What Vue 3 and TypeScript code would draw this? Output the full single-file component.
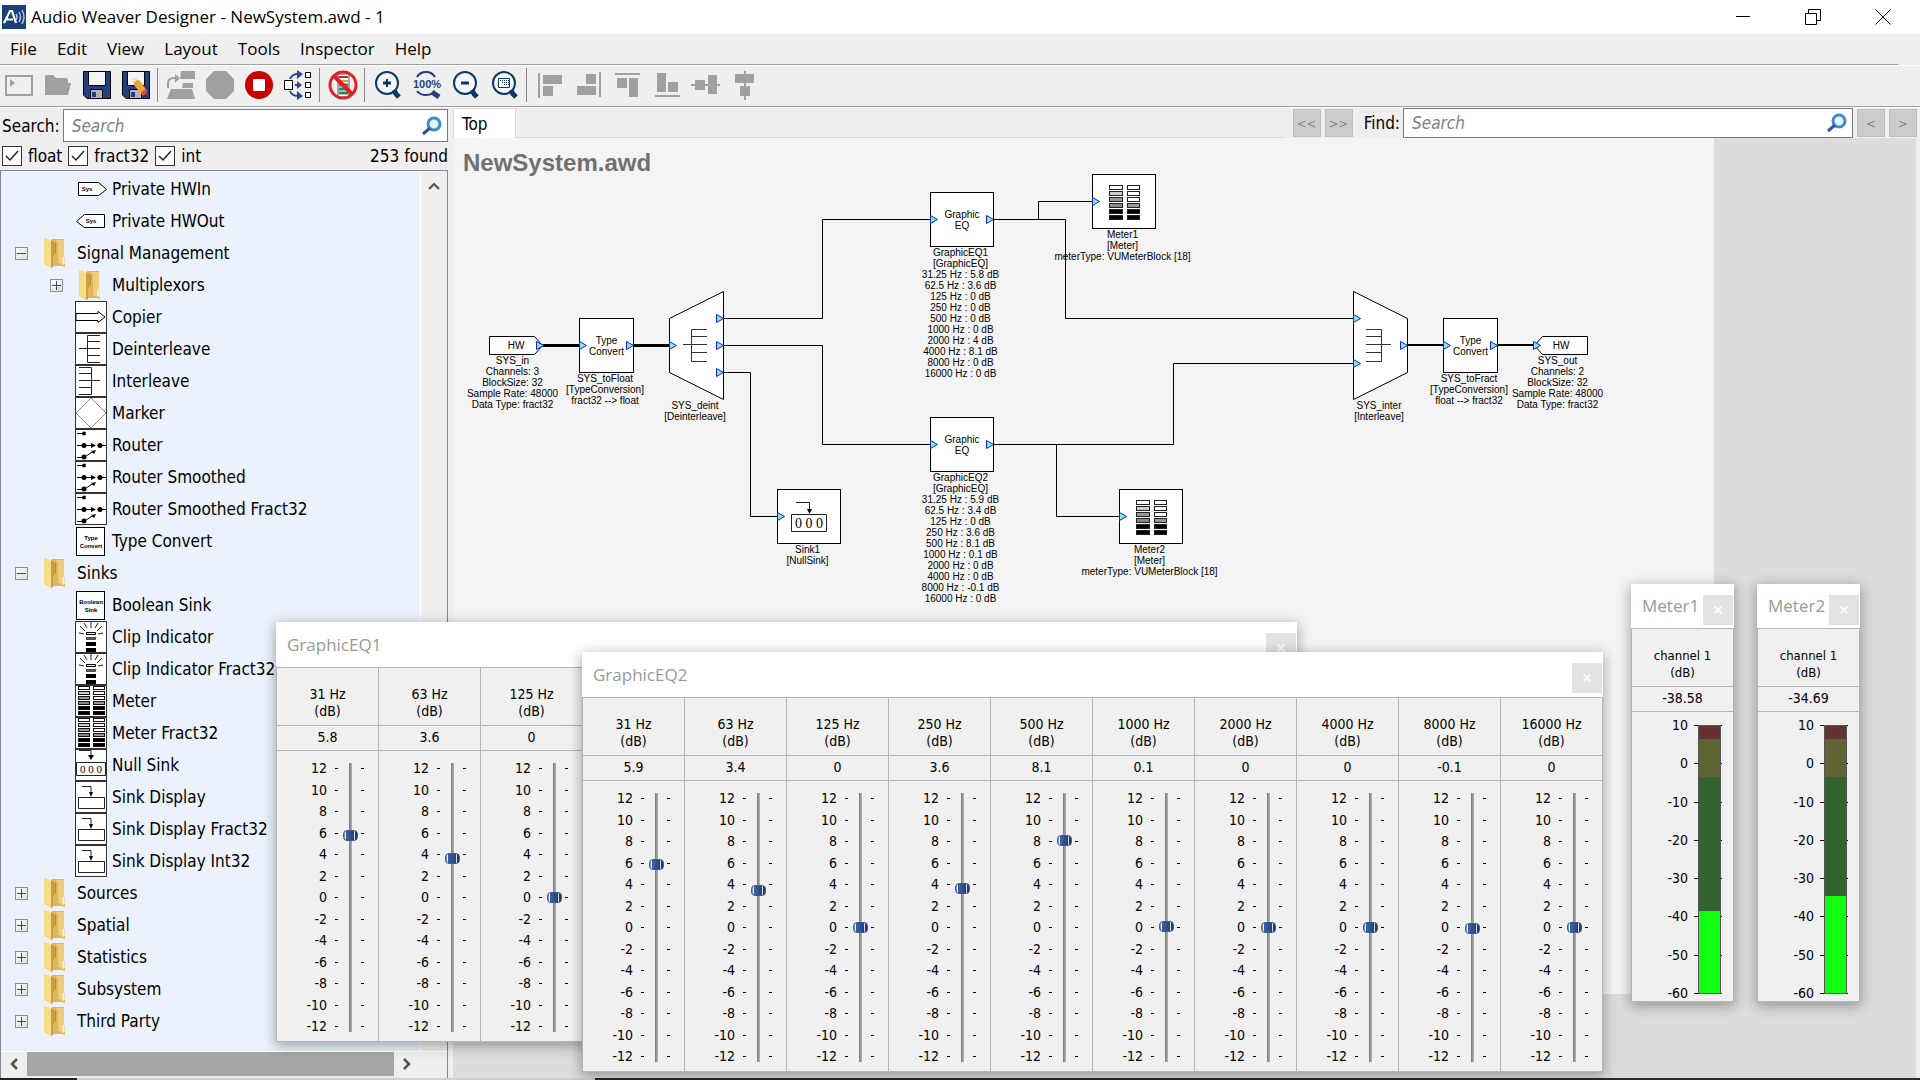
<script setup lang="ts">
import { ref } from 'vue'

interface TreeRow {
  label: string
  icon: string
  level: number
  toggle?: 'open' | 'closed'
}

interface DiagramNode {
  id: string
  x: number
  y: number
  kind: string
  text?: string[]
  labels: string[]
}

interface Port {
  x: number
  y: number
}

interface EqWindow {
  title: string
  x: number
  y: number
  gains: number[]
}

interface MeterWindow {
  title: string
  x: number
  y: number
  level: number
}

const menus = ['File', 'Edit', 'View', 'Layout', 'Tools', 'Inspector', 'Help']

const toolGroups: string[][] = [
  ['New', 'Open', 'Save', 'Save As'],
  ['Build', 'Run', 'Stop', 'Propagate'],
  ['Disable Meters'],
  ['Zoom In', 'Zoom 100', 'Zoom Out', 'Zoom Fit'],
  ['Align Left', 'Align Right', 'Align Top', 'Align Bottom', 'Align Middle', 'Align Center'],
]

const filters = ref([
  { name: 'float', on: true },
  { name: 'fract32', on: true },
  { name: 'int', on: true },
])

const tree: TreeRow[] = [
  { label: 'Private HWIn', icon: 'hwin', level: 1 },
  { label: 'Private HWOut', icon: 'hwout', level: 1 },
  { label: 'Signal Management', icon: 'folder', level: 0, toggle: 'open' },
  { label: 'Multiplexors', icon: 'folder', level: 1, toggle: 'closed' },
  { label: 'Copier', icon: 'copier', level: 1 },
  { label: 'Deinterleave', icon: 'deint', level: 1 },
  { label: 'Interleave', icon: 'inter', level: 1 },
  { label: 'Marker', icon: 'marker', level: 1 },
  { label: 'Router', icon: 'router', level: 1 },
  { label: 'Router Smoothed', icon: 'router', level: 1 },
  { label: 'Router Smoothed Fract32', icon: 'router', level: 1 },
  { label: 'Type Convert', icon: 'convert', level: 1 },
  { label: 'Sinks', icon: 'folder', level: 0, toggle: 'open' },
  { label: 'Boolean Sink', icon: 'boolean', level: 1 },
  { label: 'Clip Indicator', icon: 'clip', level: 1 },
  { label: 'Clip Indicator Fract32', icon: 'clip', level: 1 },
  { label: 'Meter', icon: 'meter', level: 1 },
  { label: 'Meter Fract32', icon: 'meter', level: 1 },
  { label: 'Null Sink', icon: 'null', level: 1 },
  { label: 'Sink Display', icon: 'display', level: 1 },
  { label: 'Sink Display Fract32', icon: 'display', level: 1 },
  { label: 'Sink Display Int32', icon: 'display', level: 1 },
  { label: 'Sources', icon: 'folder', level: 0, toggle: 'closed' },
  { label: 'Spatial', icon: 'folder', level: 0, toggle: 'closed' },
  { label: 'Statistics', icon: 'folder', level: 0, toggle: 'closed' },
  { label: 'Subsystem', icon: 'folder', level: 0, toggle: 'closed' },
  { label: 'Third Party', icon: 'folder', level: 0, toggle: 'closed' },
]

// Node, port and wire coordinates are relative to the sheet's top left corner.
const nodes: DiagramNode[] = [
  { id: 'in', x: 36, y: 198, kind: 'hwin', text: ['HW'], labels: ['SYS_in', 'Channels: 3', 'BlockSize: 32', 'Sample Rate: 48000', 'Data Type: fract32'] },
  { id: 'toFloat', x: 126, y: 180, kind: 'square', text: ['Type', 'Convert'], labels: ['SYS_toFloat', '[TypeConversion]', 'fract32 --> float'] },
  { id: 'deint', x: 216, y: 153, kind: 'deint', labels: ['SYS_deint', '[Deinterleave]'] },
  { id: 'eq1', x: 477, y: 54, kind: 'wide', text: ['Graphic', 'EQ'], labels: ['GraphicEQ1', '[GraphicEQ]', '31.25 Hz : 5.8 dB', '62.5 Hz : 3.6 dB', '125 Hz : 0 dB', '250 Hz : 0 dB', '500 Hz : 0 dB', '1000 Hz : 0 dB', '2000 Hz : 4 dB', '4000 Hz : 8.1 dB', '8000 Hz : 0 dB', '16000 Hz : 0 dB'] },
  { id: 'eq2', x: 477, y: 279, kind: 'wide', text: ['Graphic', 'EQ'], labels: ['GraphicEQ2', '[GraphicEQ]', '31.25 Hz : 5.9 dB', '62.5 Hz : 3.4 dB', '125 Hz : 0 dB', '250 Hz : 3.6 dB', '500 Hz : 8.1 dB', '1000 Hz : 0.1 dB', '2000 Hz : 0 dB', '4000 Hz : 0 dB', '8000 Hz : -0.1 dB', '16000 Hz : 0 dB'] },
  { id: 'sink', x: 324, y: 351, kind: 'sink', labels: ['Sink1', '[NullSink]'] },
  { id: 'meter1', x: 639, y: 36, kind: 'meter', labels: ['Meter1', '[Meter]', 'meterType: VUMeterBlock [18]'] },
  { id: 'meter2', x: 666, y: 351, kind: 'meter', labels: ['Meter2', '[Meter]', 'meterType: VUMeterBlock [18]'] },
  { id: 'inter', x: 900, y: 153, kind: 'inter', labels: ['SYS_inter', '[Interleave]'] },
  { id: 'toFract', x: 990, y: 180, kind: 'square', text: ['Type', 'Convert'], labels: ['SYS_toFract', '[TypeConversion]', 'float --> fract32'] },
  { id: 'out', x: 1081, y: 198, kind: 'hwout', text: ['HW'], labels: ['SYS_out', 'Channels: 2', 'BlockSize: 32', 'Sample Rate: 48000', 'Data Type: fract32'] },
]

const wires = [
  'M270 180.5H369.5V81.5H477',
  'M270 207.5H369.5V306.5H477',
  'M270 234.5H297.5V378.5H324',
  'M541 81.5H612.5V180.5H900',
  'M585.5 81.5V63.5H639',
  'M541 306.5H720.5V225.5H900',
  'M603.5 306.5V378.5H666',
]
const trunkWires = ['M90 207.5H126', 'M181 207.5H216']
const busWires = ['M955 207H990', 'M1045 207H1082']

const ports: Port[] = [
  { x: 83, y: 207 }, { x: 126, y: 207 }, { x: 173, y: 207 }, { x: 216, y: 207 },
  { x: 263, y: 180 }, { x: 263, y: 207 }, { x: 263, y: 234 },
  { x: 477, y: 81 }, { x: 533, y: 81 }, { x: 477, y: 306 }, { x: 533, y: 306 },
  { x: 324, y: 378 }, { x: 639, y: 63 }, { x: 666, y: 378 },
  { x: 900, y: 180 }, { x: 900, y: 225 }, { x: 947, y: 207 },
  { x: 990, y: 207 }, { x: 1037, y: 207 }, { x: 1080, y: 207 },
]

const bands = ['31', '63', '125', '250', '500', '1000', '2000', '4000', '8000', '16000']
const eqTicks = [12, 10, 8, 6, 4, 2, 0, -2, -4, -6, -8, -10, -12]
const meterTicks = [10, 0, -10, -20, -30, -40, -50, -60]

// Only the channels left uncovered by the panel in front are mounted.
const eqWindows = ref<EqWindow[]>([
  { title: 'GraphicEQ1', x: 276, y: 622, gains: [5.8, 3.6, 0] },
  { title: 'GraphicEQ2', x: 582, y: 652, gains: [5.9, 3.4, 0, 3.6, 8.1, 0.1, 0, 0, -0.1, 0] },
])

const meterWindows: MeterWindow[] = [
  { title: 'Meter1', x: 1631, y: 584, level: -38.58 },
  { title: 'Meter2', x: 1757, y: 584, level: -34.69 },
]

const levelHeight = (db: number): string => `${((db + 60) / 70) * 100}%`

const meterCells = ['#fff', '#ccc', '#999', '#888', '#000', '#000']
const meterCellsRight = ['#fff', '#fff', '#fff', '#999', '#000', '#000']
</script>

<template>
  <div class="app">
    <header class="titlebar">
      <svg class="logo" width="24" height="24" viewBox="0 0 24 24" aria-hidden="true">
        <rect width="24" height="24" fill="#1d3f77" />
        <path d="M2 18L8 6h2l4 12M5 14.500h6" fill="none" stroke="#fff" stroke-width="2.200" />
        <path d="M14 9q2 3 0 6M17 7q3 5 0 10M20 5q4 7 0 14" fill="none" stroke="#b8cdf0" stroke-width="1.400" />
      </svg>
      <h1>Audio Weaver Designer - NewSystem.awd - 1</h1>
      <div class="window-buttons">
        <button type="button" aria-label="Minimize">
          <svg width="16" height="16"><path d="M1 7.500H15" stroke="#000" /></svg>
        </button>
        <button type="button" aria-label="Restore">
          <svg width="16" height="16"><path d="M.5 4.500h11v11H.5zM3.500 4V.5h12v11H12" fill="none" stroke="#000" /></svg>
        </button>
        <button type="button" aria-label="Close">
          <svg width="16" height="16"><path d="M.5.5l15 15M15.500.5l-15 15" stroke="#000" /></svg>
        </button>
      </div>
    </header>

    <nav class="menubar">
      <button v-for="m in menus" :key="m" type="button">{{ m }}</button>
    </nav>

    <div class="toolbar">
      <div v-for="(group, g) in toolGroups" :key="g" class="tool-group">
        <button v-for="t in group" :key="t" type="button" :aria-label="t">
          <svg width="30" height="30" viewBox="0 0 30 30">
            <template v-if="t === 'New'">
              <path d="M2 6h26v19H2z" fill="none" stroke="#a0a0a0" stroke-width="2" />
              <path d="M6 9l5 4-5 4z" fill="#a0a0a0" />
            </template>
            <path v-else-if="t === 'Open'" d="M2 25V7q0-2 2-2h6l3 3h10q2 0 2 2v3h3l-3 12z" fill="#a0a0a0" />
            <template v-else-if="t === 'Save' || t === 'Save As'">
              <path d="M1.500 1.500h27v27H5l-3.500-3.500z" fill="#223f80" stroke="#000" />
              <path d="M6.500 1.500h17v14h-17z" fill="#f4f4f4" stroke="#000" />
              <path d="M8.500 19.500h12v9h-12z" fill="#b4b4b4" stroke="#000" />
              <path d="M10 22h4v5h-4z" fill="#223f80" />
              <template v-if="t === 'Save As'">
                <path d="M12 8l7 3 7 10-5 4-8-10z" fill="#efa32c" />
                <path d="M12 8l4 2-3 3z" fill="#fbe3bd" />
                <path d="M24 19l2 4-4 3-2-3z" fill="#e0483e" />
              </template>
            </template>
            <template v-else-if="t === 'Build'">
              <path d="M15 1h14v8H14zM17 13h10v5H16zM5 19h21l3 10H1z" fill="#a0a0a0" />
              <path d="M2 18v-5q0-5 6-5h3" fill="none" stroke="#a0a0a0" stroke-width="2" />
              <path d="M9 4l5 4-5 5z" fill="#a0a0a0" />
            </template>
            <path v-else-if="t === 'Run'" d="M9 1h12l8 8v12l-8 8H9l-8-8V9z" fill="#a0a0a0" />
            <template v-else-if="t === 'Stop'">
              <circle cx="15" cy="15" r="14" fill="#c80000" />
              <rect x="9" y="9" width="12" height="12" rx="1" fill="#fff" />
            </template>
            <template v-else-if="t === 'Propagate'">
              <path d="M1.500 10.500h8v9h-8zM22.500 2.500h5v5h-5zM22.500 12.500h5v5h-5zM22.500 22.500h5v5h-5z" fill="#fff" stroke="#000" />
              <path d="M7 9q2-5 8-5M12 15h4M7 21q2 5 8 5" fill="none" stroke="#244a8e" stroke-width="2" />
              <path d="M14 0l6 4-6 5zM14 11l5 4-5 4zM14 21l6 5-6 4z" fill="#244a8e" />
            </template>
            <template v-else-if="t === 'Disable Meters'">
              <rect x="10" y="4" width="11" height="23" fill="#fff" stroke="#555" />
              <path d="M11 7h9" stroke="#d02020" stroke-width="2" />
              <path d="M11 11h9" stroke="#e0a020" stroke-width="2" />
              <path d="M11 15h9M11 19h9M11 23h9" stroke="#1a8f50" stroke-width="3" />
              <circle cx="15" cy="15" r="13" fill="none" stroke="#e02028" stroke-width="3" />
              <path d="M6 6l18 18" stroke="#e02028" stroke-width="4" />
            </template>
            <template v-else-if="t === 'Zoom 100'">
              <path d="M5 7q3-5 9-5t9 5M5 21q3 4 9 4 4 0 7-2" fill="none" stroke="#1f3f7a" stroke-width="2" />
              <path d="M20 22l7 5" stroke="#1f3f7a" stroke-width="5" />
              <text x="15" y="18" text-anchor="middle" class="hundred">100%</text>
            </template>
            <template v-else-if="t.startsWith('Zoom')">
              <circle cx="14" cy="13" r="11" fill="#fff" fill-opacity=".5" stroke="#0b3864" stroke-width="2" />
              <path d="M21 20l2 4 3 3" fill="none" stroke="#0b3864" stroke-width="5" />
              <path v-if="t !== 'Zoom Fit'" d="M10 13h8" stroke="#0b3864" stroke-width="3" />
              <path v-if="t === 'Zoom In'" d="M14 9v8" stroke="#0b3864" stroke-width="2" />
              <template v-if="t === 'Zoom Fit'">
                <path d="M8.500 8.500h11v9h-11z" fill="#fff" stroke="#0b3864" />
                <path d="M10 10.500h9M12 12.500h7M14 14.500h5" stroke="#0b3864" stroke-dasharray="1 1" />
              </template>
            </template>
            <path v-else-if="t === 'Align Left'" d="M3 3h2v25H3zM8 5h19v9H8zM8 16h10v10H8z" fill="#a0a0a0" />
            <path v-else-if="t === 'Align Right'" d="M25 2h2v25h-2zM12 4h10v10H12zM3 16h19v9H3z" fill="#a0a0a0" />
            <path v-else-if="t === 'Align Top'" d="M2 3h25v2H2zM4 8h10v10H4zM16 8h9v19h-9z" fill="#a0a0a0" />
            <path v-else-if="t === 'Align Bottom'" d="M3 25h25v2H3zM5 3h9v19H5zM16 12h10v10H16z" fill="#a0a0a0" />
            <path v-else-if="t === 'Align Middle'" d="M0 14h29v2H0zM4 10h10v10H4zM17 5h9v19h-9z" fill="#a0a0a0" />
            <path v-else d="M14 1h2v29h-2zM5 4h19v9H5zM10 16h10v10H10z" fill="#a0a0a0" />
          </svg>
        </button>
      </div>
    </div>

    <div class="body">
      <aside class="sidebar">
        <div class="search-row">
          <label for="module-search">Search:</label>
          <div class="search-box">
            <input id="module-search" type="text" placeholder="Search" />
            <svg width="20" height="20" viewBox="0 0 20 20" aria-hidden="true">
              <circle cx="12" cy="8" r="6" fill="#e4f3fb" stroke="#3f8cc4" stroke-width="3" />
              <path d="M8 12l-7 6" stroke="#38509a" stroke-width="3" />
            </svg>
          </div>
        </div>
        <div class="filter-row">
          <label v-for="f in filters" :key="f.name">
            <input v-model="f.on" type="checkbox" />{{ f.name }}
          </label>
          <span class="count">253 found</span>
        </div>

        <div class="tree-box">
          <div class="tree-main">
            <ul class="tree">
              <li v-for="row in tree" :key="row.label" :class="`level-${row.level}`">
                <button
                  v-if="row.toggle"
                  type="button"
                  class="toggle"
                  :aria-label="row.toggle === 'open' ? 'Collapse' : 'Expand'"
                >
                  <svg width="11" height="11">
                    <path :d="row.toggle === 'open' ? 'M1 5.500h9' : 'M1 5.500h9M5.500 1v9'" stroke="#33478f" />
                  </svg>
                </button>
                <span v-else class="toggle-space"></span>
                <svg v-if="row.icon === 'folder'" class="folder" width="22" height="32" viewBox="0 0 22 32">
                  <path d="M8 2h12v18l1 1v9l-3-1H8z" fill="#dcb55c" />
                  <path d="M7 4l5 2v10l-3 3v11H7z" fill="#b8913c" />
                  <path d="M12 3h8v18l1 8-7-3V6z" fill="#f0cc7c" />
                  <path d="M0 1l7 2v28l-7-4z" fill="#f7dc88" />
                  <path d="M7 3l4 3v11l-2 3v10l-2 1z" fill="#c79f45" />
                  <path d="M19.500 20v7" stroke="#fffbe8" stroke-width="2" />
                </svg>
                <svg v-else class="glyph" width="32" height="32" viewBox="0 0 32 32">
                  <template v-if="row.icon === 'hwin'">
                    <path d="M3.500 9.500h20l8 7-8 6h-20z" fill="#fff" stroke="#000" />
                    <text x="12" y="18" class="micro">Sys</text>
                  </template>
                  <template v-else-if="row.icon === 'hwout'">
                    <path d="M29.500 9.500h-20l-8 7 8 6h20z" fill="#fff" stroke="#000" />
                    <text x="16" y="18" class="micro">Sys</text>
                  </template>
                  <template v-else-if="row.icon === 'convert' || row.icon === 'boolean'">
                    <rect x="1.500" y="2.500" width="28" height="28" fill="#fff" stroke="#000" />
                    <text x="16" y="15" class="micro">{{ row.icon === 'convert' ? 'Type' : 'Boolean' }}</text>
                    <text x="16" y="23" class="micro">{{ row.icon === 'convert' ? 'Convert' : 'Sink' }}</text>
                  </template>
                  <template v-else>
                    <rect x=".5" y=".5" width="31" height="31" fill="#fff" stroke="#333" />
                    <path v-if="row.icon === 'copier'" d="M1 12.500h22v-2l7 5.500-7 5.500v-2H1z" fill="none" stroke="#000" />
                    <path v-else-if="row.icon === 'deint'" d="M25 2.500H12.500v27H25M12 8.500h13M4 15.500h21M12 22.500h13" fill="none" stroke="#222" />
                    <path v-else-if="row.icon === 'inter'" d="M4 2.500h12.500v27H4M4 8.500h12M4 15.500h21M4 22.500h12" fill="none" stroke="#222" />
                    <path v-else-if="row.icon === 'marker'" d="M16 1l15 15-15 15L1 16z" fill="none" stroke="#888" />
                    <template v-else-if="row.icon === 'router'">
                      <path d="M2 4.500h7M2 16.500h15M22 16.500h9M2 28.500h7l9-6" fill="none" stroke="#000" />
                      <circle cx="9" cy="4.500" r="2" /><circle cx="9" cy="16.500" r="2.500" />
                      <circle cx="25" cy="16.500" r="2.500" /><circle cx="9" cy="28" r="2.500" />
                      <path d="M16 14l5 2.500-5 2.500zM21 21l-5 1 3 3z" />
                    </template>
                    <template v-else-if="row.icon === 'clip'">
                      <path d="M4 12l5 1M5 5l5 5M9 2l3 5M16 1v6M23 2l-3 5M27 5l-5 5M28 12l-5 1" stroke="#222" />
                      <path d="M11.500 11.500h9v2h-9z" fill="#fff" stroke="#000" />
                      <path d="M11 16h10v3H11z" fill="#555" />
                      <path d="M11 21h10v4H11zM11 27h10v4H11z" />
                    </template>
                    <template v-else-if="row.icon === 'meter'">
                      <g v-for="(c, i) in meterCells" :key="i" stroke="#111">
                        <rect x="3.500" :y="i * 5 + 1.5" width="11" height="3" :fill="c" />
                        <rect x="18.500" :y="i * 5 + 1.5" width="11" height="3" :fill="meterCellsRight[i]" />
                      </g>
                    </template>
                    <template v-else-if="row.icon === 'null'">
                      <path d="M4 1.500h12v5M1.500 13.500h29v13h-29z" fill="none" stroke="#222" />
                      <path d="M13 6h6l-3 5z" />
                      <text x="16" y="24" class="zeros">0 0 0</text>
                    </template>
                    <template v-else>
                      <path d="M7 5.500h9v6M3.500 16.500h26v11h-26z" fill="none" stroke="#222" />
                      <path d="M14 11h4l-2 5z" />
                    </template>
                  </template>
                </svg>
                <span class="name">{{ row.label }}</span>
              </li>
            </ul>
            <div class="vscroll">
              <svg width="12" height="8" aria-hidden="true"><path d="M1 7l5-5 5 5" fill="none" stroke="#505050" stroke-width="2" /></svg>
            </div>
          </div>
          <div class="hscroll">
            <svg width="10" height="12" aria-hidden="true"><path d="M8 1L3 6l5 5" fill="none" stroke="#505050" stroke-width="2.500" /></svg>
            <div class="hthumb"></div>
            <svg width="10" height="12" aria-hidden="true"><path d="M2 1l5 5-5 5" fill="none" stroke="#505050" stroke-width="2.500" /></svg>
          </div>
        </div>
      </aside>

      <main class="workspace">
        <div class="tabbar">
          <button type="button" class="tab">Top</button>
          <div class="tab-rule"></div>
          <button type="button" class="step" disabled>&lt;&lt;</button>
          <button type="button" class="step" disabled>&gt;&gt;</button>
          <label for="find">Find:</label>
          <div class="search-box find-box">
            <input id="find" type="text" placeholder="Search" />
            <svg width="20" height="20" viewBox="0 0 20 20" aria-hidden="true">
              <circle cx="12" cy="8" r="6" fill="#e4f3fb" stroke="#3f8cc4" stroke-width="3" />
              <path d="M8 12l-7 6" stroke="#38509a" stroke-width="3" />
            </svg>
          </div>
          <button type="button" class="step" disabled>&lt;</button>
          <button type="button" class="step" disabled>&gt;</button>
        </div>

        <div class="canvas">
          <section class="sheet">
            <h2>NewSystem.awd</h2>
            <svg class="wires" width="100%" height="100%" aria-hidden="true">
              <path v-for="w in wires" :key="w" :d="w" class="wire" />
              <path v-for="w in trunkWires" :key="w" :d="w" class="wire trunk" />
              <path v-for="w in busWires" :key="w" :d="w" class="wire bus" />
            </svg>
            <div
              v-for="n in nodes"
              :key="n.id"
              class="node"
              :class="n.kind"
              :style="{ left: `${n.x}px`, top: `${n.y}px` }"
            >
              <div class="block">
                <svg v-if="n.kind === 'hwin'" width="54" height="19">
                  <path d="M.5.5h45l8 9-8 9H.5z" fill="#fff" stroke="#000" />
                </svg>
                <svg v-else-if="n.kind === 'hwout'" width="54" height="19">
                  <path d="M53.500.5h-45l-8 9 8 9h45z" fill="#fff" stroke="#000" />
                </svg>
                <svg v-else-if="n.kind === 'deint'" width="55" height="109">
                  <path d="M.5 27.500L54.500.5v108L.5 81.500z" fill="#fff" stroke="#000" />
                  <path d="M38 38.500H22.500v32H38M22 45.500h16M14 53.500h24M22 61.500h16" fill="none" stroke="#333" />
                </svg>
                <svg v-else-if="n.kind === 'inter'" width="55" height="109">
                  <path d="M.5.5l54 27v54l-54 27z" fill="#fff" stroke="#000" />
                  <path d="M13 38.500h15.500v32H13M13 45.500h15M13 53.500h25M13 61.500h15" fill="none" stroke="#333" />
                </svg>
                <svg v-else-if="n.kind === 'sink'" width="36" height="36">
                  <path d="M5 3.500h13.500v8M.5 15.500h35v17H.5z" fill="none" stroke="#222" />
                  <path d="M16 10h5l-2.500 5z" />
                  <text x="18" y="29" class="zeros big">0 0 0</text>
                </svg>
                <svg v-else-if="n.kind === 'meter'" width="34" height="38">
                  <g v-for="(c, i) in meterCells" :key="i" stroke="#222">
                    <rect x="2.500" :y="i * 6 + 2.5" width="13" height="4" :fill="c" />
                    <rect x="20.500" :y="i * 6 + 2.5" width="12" height="4" :fill="meterCellsRight[i]" />
                  </g>
                </svg>
                <p v-if="n.text" class="block-text">
                  <span v-for="line in n.text" :key="line">{{ line }}</span>
                </p>
              </div>
              <p class="labels">
                <span v-for="line in n.labels" :key="line">{{ line }}</span>
              </p>
            </div>
            <svg class="wires" width="100%" height="100%" aria-hidden="true">
              <path v-for="p in ports" :key="`${p.x}-${p.y}`" :d="`M${p.x + 0.5} ${p.y - 3.5}l7 4l-7 4z`" class="port" />
            </svg>
          </section>
        </div>
      </main>
    </div>
    <div class="edge"></div>

    <section v-for="w in eqWindows" :key="w.title" class="panel eq-panel" :style="{ left: `${w.x}px`, top: `${w.y}px` }">
      <header>
        <h3>{{ w.title }}</h3>
        <button type="button" aria-label="Close panel">
          <svg width="10" height="10"><path d="M1.500 1.500l7 7M8.500 1.500l-7 7" stroke="#f8f8f8" stroke-width="2" /></svg>
        </button>
      </header>
      <div class="channels">
        <div v-for="(gain, i) in w.gains" :key="i" class="channel">
          <label class="caption" :for="`${w.title}-${i}`">
            <span>{{ bands[i] }} Hz</span><span>(dB)</span>
          </label>
          <output class="value">{{ gain }}</output>
          <div class="scale">
            <ul class="ticks">
              <li v-for="t in eqTicks" :key="t"><span>{{ t }}</span></li>
            </ul>
            <input
              :id="`${w.title}-${i}`"
              v-model.number="w.gains[i]"
              type="range"
              min="-12"
              max="12"
              step="0.1"
            />
          </div>
        </div>
      </div>
    </section>

    <section v-for="w in meterWindows" :key="w.title" class="panel meter-panel" :style="{ left: `${w.x}px`, top: `${w.y}px` }">
      <header>
        <h3>{{ w.title }}</h3>
        <button type="button" aria-label="Close panel">
          <svg width="10" height="10"><path d="M1.500 1.500l7 7M8.500 1.500l-7 7" stroke="#f8f8f8" stroke-width="2" /></svg>
        </button>
      </header>
      <div class="channels">
        <div class="channel">
          <div class="caption small"><span>channel 1</span><span>(dB)</span></div>
          <output class="value">{{ w.level }}</output>
          <div class="scale level-scale">
            <ul class="ticks">
              <li v-for="t in meterTicks" :key="t"><span>{{ t }}</span></li>
            </ul>
            <div class="bar" role="meter" aria-valuemin="-60" aria-valuemax="10" :aria-valuenow="w.level">
              <div class="fill" :style="{ height: levelHeight(w.level) }"></div>
            </div>
          </div>
        </div>
      </div>
    </section>
  </div>
</template>

<style>
body {
  margin: 0;
  background: #efefef;
}
</style>

<style scoped>
.app {
  --tahoma: "DejaVu Sans Condensed", "DejaVu Sans", sans-serif;
  --segoe: "Open Sans", "Noto Sans", sans-serif;
  position: relative;
  display: flex;
  flex-direction: column;
  min-height: 100vh;
  overflow: hidden;
  background: #efefef;
  color: #000;
  font-family: var(--tahoma);
  font-size: 17px;
}

.app * {
  box-sizing: border-box;
}

button {
  padding: 0;
  border: 0;
  background: none;
  color: inherit;
  font: inherit;
}

input {
  margin: 0;
  font: inherit;
}

h1,
h2,
h3,
p,
ul {
  margin: 0;
  padding: 0;
  list-style: none;
}

svg {
  display: block;
  flex: none;
}

/* Title bar and menus */
.titlebar {
  display: flex;
  align-items: center;
  gap: 5px;
  height: 34px;
  padding-left: 2px;
  background: #fff;
}

.titlebar h1 {
  flex: 1;
  font: 400 17px/34px var(--segoe);
}

.window-buttons {
  display: flex;
  margin-right: 2px;
}

.window-buttons button {
  display: flex;
  align-items: center;
  justify-content: center;
  width: 70px;
  height: 33px;
}

.menubar {
  display: flex;
  height: 31px;
  margin-right: 22px;
  border-bottom: 1px solid #a0a0a0;
}

.menubar button {
  padding: 0 10px;
  font: 17px/30px var(--segoe);
}

/* Toolbar */
.toolbar {
  display: flex;
  height: 42px;
  padding-bottom: 2px;
  border-top: 1px solid #fff;
  border-bottom: 1px solid #a0a0a0;
}

.tool-group {
  display: flex;
  align-items: center;
  padding-right: 6px;
}

.tool-group:not(:last-child) {
  background: linear-gradient(#888, #888) right 4px center / 1px 34px no-repeat;
}

.tool-group button {
  width: 39px;
  padding-left: 4px;
}

.hundred {
  fill: #1f3f7a;
  font: 700 11px "Liberation Sans", Arial, sans-serif;
}

/* Sidebar */
.body {
  display: flex;
  flex: 1;
  border-top: 1px solid #fff;
}

.sidebar {
  display: flex;
  flex-direction: column;
  width: 448px;
}

.search-row {
  display: flex;
  align-items: center;
  gap: 3px;
  padding: 1px 0 0 2px;
}

.search-box {
  display: flex;
  flex: 1;
  align-items: center;
  height: 33px;
  padding: 0 5px 0 8px;
  border: 1px solid #7a7a7a;
  background: #fff;
}

.search-box input {
  flex: 1;
  min-width: 0;
  height: 28px;
  padding: 0;
  border: 0;
  outline: 0;
  background: none;
}

.search-box input::placeholder {
  color: #808080;
  font-style: italic;
}

.filter-row {
  display: flex;
  align-items: center;
  gap: 6px;
  height: 28px;
  padding-left: 2px;
}

.filter-row label {
  display: flex;
  align-items: center;
  gap: 6px;
}

.filter-row input {
  width: 20px;
  height: 20px;
  border: 1px solid #333;
  background: #fff;
  appearance: none;
}

.filter-row input:checked {
  background: #fff
    url("data:image/svg+xml,%3Csvg xmlns='http://www.w3.org/2000/svg' width='18' height='18'%3E%3Cpath d='M3 9l4 4 8-9' fill='none' stroke='%23222' stroke-width='1.5'/%3E%3C/svg%3E")
    center no-repeat;
}

.count {
  margin-left: auto;
}

.tree-box {
  display: flex;
  flex: 1;
  flex-direction: column;
  border: 1px solid #828790;
  border-bottom: 0;
}

.tree-main {
  display: flex;
  flex: 1;
}

.tree {
  flex: 1;
  padding-top: 2px;
  border-right: 1px solid #fff;
  background: #ebf2fc;
}

.tree li {
  display: flex;
  align-items: center;
  height: 32px;
  padding-left: 14px;
}

.tree .level-1 {
  padding-left: 49px;
}

.toggle,
.toggle-space {
  width: 13px;
  height: 13px;
}

.toggle {
  border: 1px solid #8f8f8f;
  background: linear-gradient(135deg, #fff, #dcdcdc);
}

.folder {
  margin: 0 11px 0 16px;
}

.glyph {
  margin: 0 5px 0 12px;
}

.micro {
  font: 700 6px "Liberation Sans", Arial, sans-serif;
  text-anchor: middle;
}

.zeros {
  font: 11px "Liberation Serif", "Times New Roman", serif;
  text-anchor: middle;
}

.zeros.big {
  font-size: 14px;
}

.name {
  white-space: nowrap;
}

.vscroll {
  display: flex;
  justify-content: center;
  width: 26px;
  padding-top: 11px;
}

.hscroll {
  display: flex;
  align-items: center;
  gap: 8px;
  height: 27px;
  padding: 0 35px 2px 8px;
  border-top: 1px solid #fff;
}

.hthumb {
  flex: 1;
  height: 24px;
  background: #a6a6a6;
}

/* Workspace */
.workspace {
  display: flex;
  flex: 1;
  flex-direction: column;
  min-width: 0;
  padding: 0 4px 0 5px;
}

.tabbar {
  display: flex;
  align-items: center;
  gap: 4px;
  height: 30px;
  margin-right: -1px;
}

.tab {
  width: 63px;
  height: 30px;
  padding-left: 8px;
  border: 1px solid #d9d9d9;
  border-bottom: 0;
  background: #fff;
  text-align: left;
}

.tab-rule {
  flex: 1;
  align-self: stretch;
  margin: 0 6px 0 -4px;
  border-bottom: 1px solid #d9d9d9;
}

.tabbar label {
  padding-left: 7px;
  margin-right: -1px;
}

.step {
  width: 28px;
  height: 28px;
  border: 1px solid #bfbfbf;
  background: #ccc;
  color: #838383;
  font-size: 13px;
}

.find-box {
  flex: none;
  width: 450px;
  height: 30px;
}

.canvas {
  flex: 1;
  padding: 0 202px 84px 0;
  background: #dcdcdc;
}

.sheet {
  position: relative;
  height: 100%;
  background: #f4f4f4;
}

.sheet h2 {
  padding: 11px 0 0 10px;
  color: #707070;
  font: 700 24px/28px "Liberation Sans", Arial, sans-serif;
}

.wires {
  position: absolute;
  inset: 0;
}

.wire {
  fill: none;
  stroke: #000;
}

.trunk {
  stroke-width: 3;
}

.bus {
  stroke-width: 2;
}

.port {
  fill: #84e4f8;
  stroke: #1428b4;
}

.node {
  position: absolute;
  display: flex;
  flex-direction: column;
  align-items: center;
  font: 10px/11px "Liberation Sans", Arial, sans-serif;
}

.block {
  display: grid;
  place-items: center;
}

.block > * {
  grid-area: 1 / 1;
}

.square .block {
  width: 55px;
  height: 55px;
  border: 1px solid #000;
  background: #fff;
}

.wide .block,
.sink .block,
.meter .block {
  width: 64px;
  height: 55px;
  border: 1px solid #000;
  background: #fff;
}

.node.hwin,
.node.hwout {
  width: 54px;
}

.node.square,
.node.deint,
.node.inter {
  width: 55px;
}

.node.wide,
.node.sink,
.node.meter {
  width: 64px;
}

.block-text,
.labels {
  display: flex;
  flex-direction: column;
  align-items: center;
  white-space: nowrap;
}

.block-text {
  position: relative;
}

.labels {
  padding-right: 3px;
}

.hwin .labels,
.hwout .labels {
  padding-right: 7px;
}

/* Inspector panels */
.panel {
  position: absolute;
  background: #f0f0f0;
  box-shadow: 0 3px 12px 1px rgba(0, 0, 0, 0.32);
  font-size: 14px;
  line-height: 17px;
}

.eq-panel {
  width: 1021px;
}

.panel header {
  display: flex;
  align-items: center;
  justify-content: space-between;
  height: 45px;
  padding: 0 1px 0 11px;
  background: #fff;
}

.meter-panel header {
  height: 44px;
}

.panel h3 {
  color: #999;
  font: 400 17px/44px var(--segoe);
}

.panel header button {
  display: flex;
  align-items: center;
  justify-content: center;
  width: 30px;
  height: 30px;
  margin-top: 7px;
  background: #e3e3e3;
}

.channels {
  display: flex;
  border-right: 1px solid #b4b4b4;
  border-bottom: 1px solid #b4b4b4;
}

.channel {
  display: flex;
  flex-direction: column;
  width: 102px;
  border-left: 1px solid #b4b4b4;
}

.caption {
  display: flex;
  flex-direction: column;
  align-items: center;
  height: 58px;
  padding-top: 18px;
  border-top: 1px solid #b4b4b4;
}

.caption.small {
  font-size: 13px;
}

.value {
  height: 25px;
  border-top: 1px solid #b4b4b4;
  line-height: 22px;
  text-align: center;
}

.scale {
  display: grid;
  align-items: center;
  height: 291px;
  padding-top: 3px;
  border-top: 1px solid #b4b4b4;
}

.level-scale {
  height: 290px;
  padding-top: 5px;
}

.scale > * {
  grid-area: 1 / 1;
}

.ticks {
  display: flex;
  flex-direction: column;
  justify-content: space-between;
  height: 275px;
}

.ticks li {
  display: flex;
  align-items: center;
}

.ticks li span {
  width: 50px;
  text-align: right;
}

.ticks li::before,
.ticks li::after {
  order: 1;
  width: 3px;
  height: 1px;
  margin-left: 8px;
  background: #000;
  content: "";
}

.ticks li::after {
  margin-left: 23px;
}

.level-scale .ticks {
  height: 285px;
}

.level-scale .ticks li span {
  width: 56px;
}

.level-scale .ticks li::before {
  width: 4px;
  margin-left: 6px;
}

.level-scale .ticks li::after {
  width: 1px;
  margin-left: 23px;
}

.scale input {
  width: 15px;
  height: 269px;
  margin-left: 66px;
  background: linear-gradient(90deg, #777, #b4b4b4) center / 3px 100% no-repeat;
  appearance: none;
  direction: rtl;
  writing-mode: vertical-lr;
}

.scale input::-webkit-slider-thumb {
  width: 15px;
  height: 11px;
  border: 1px solid #3d5a90;
  border-radius: 4px;
  background: linear-gradient(
    90deg,
    #7d97c4 0 1px,
    #e8eef8 1px 2px,
    #3c5f9c 2px 3px,
    #26427a 10px,
    #d8e0ee 10px 11px,
    #2a3a5c 11px
  );
  appearance: none;
}

.bar {
  display: flex;
  flex-direction: column;
  justify-content: flex-end;
  width: 23px;
  height: 269px;
  margin-left: 66px;
  border: 1px solid #555;
  background: linear-gradient(#643232 0 5%, #5f6432 5% 19%, #326432 19%);
}

.fill {
  background: #12ff12;
}

.edge {
  height: 2px;
  background: linear-gradient(90deg, #222 0 4%, #cfcfcf 4% 31%, #2a2a2e 31%);
}
</style>
